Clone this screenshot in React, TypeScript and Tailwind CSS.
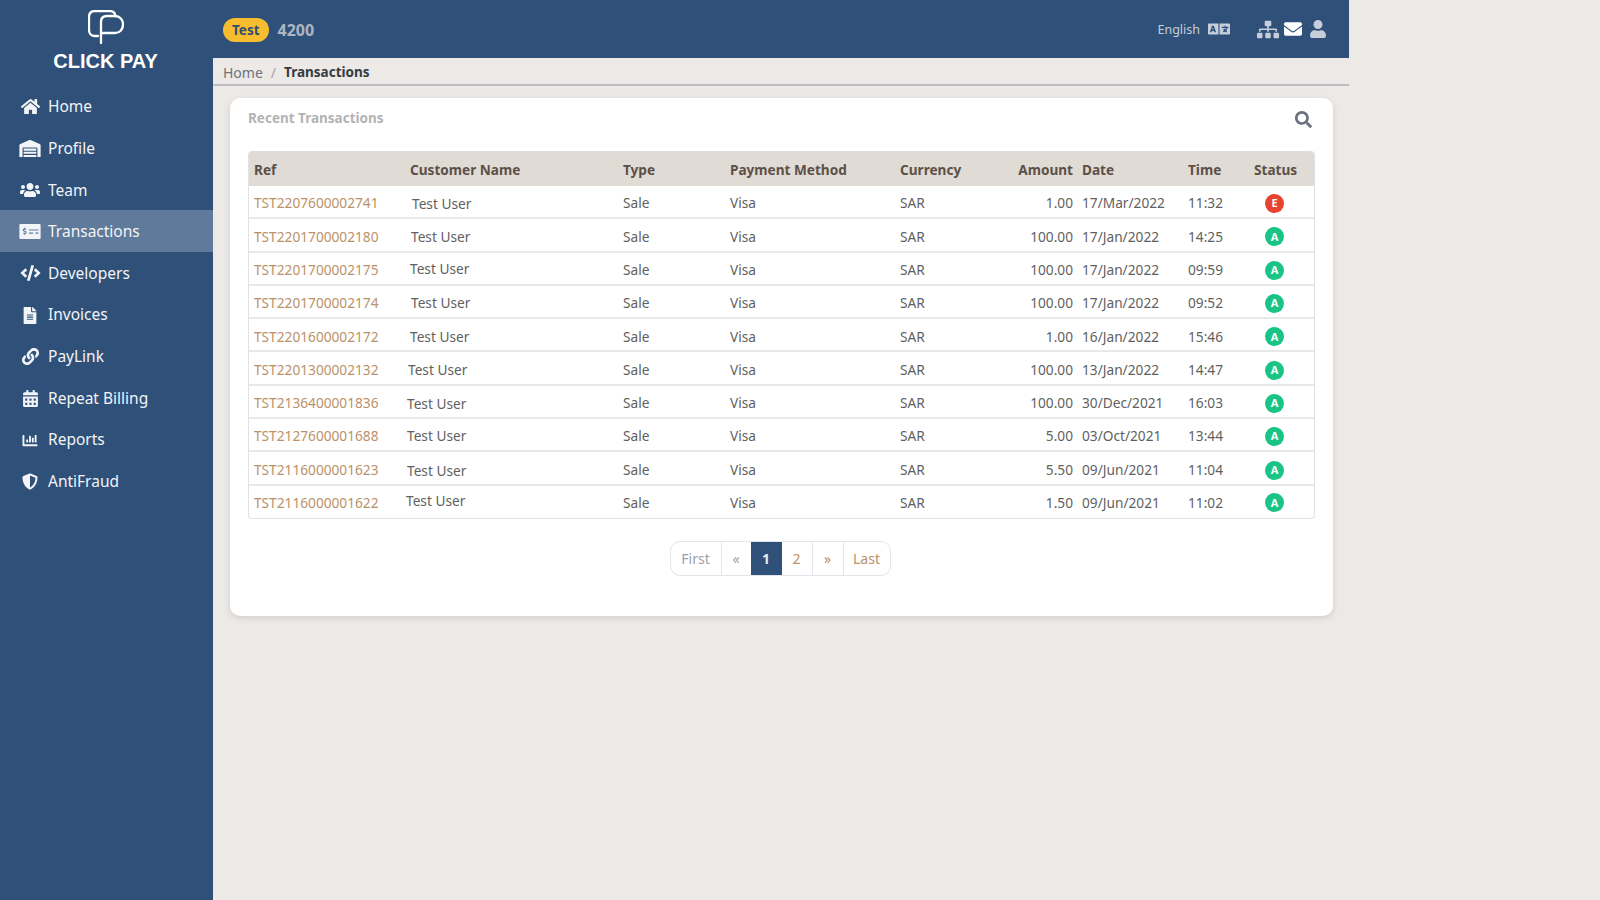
import {
  FaHome,
  FaWarehouse,
  FaUsers,
  FaMoneyCheckAlt,
  FaCode,
  FaFileAlt,
  FaLink,
  FaCalendarAlt,
  FaChartBar,
  FaShieldAlt,
  FaLanguage,
  FaSitemap,
  FaEnvelope,
  FaUser,
  FaSearch,
} from 'react-icons/fa';

const navItems = [
  { label: 'Home', icon: FaHome, size: 'h-[17px] w-[21px]' },
  { label: 'Profile', icon: FaWarehouse, size: 'h-[17px] w-[22px]' },
  { label: 'Team', icon: FaUsers, size: 'h-[16px] w-[22px]' },
  { label: 'Transactions', icon: FaMoneyCheckAlt, size: 'h-[17px] w-[22px]', active: true },
  { label: 'Developers', icon: FaCode, size: 'h-[16px] w-[21px]' },
  { label: 'Invoices', icon: FaFileAlt, size: 'h-[17px] w-[14px]' },
  { label: 'PayLink', icon: FaLink, size: 'h-[17px] w-[17px]' },
  { label: 'Repeat Billing', icon: FaCalendarAlt, size: 'h-[17px] w-[15px]' },
  { label: 'Reports', icon: FaChartBar, size: 'h-[15px] w-[18px]' },
  { label: 'AntiFraud', icon: FaShieldAlt, size: 'h-[17px] w-[16px]' },
];

// the customer cell wobbles a little in the screenshot, hence the per row classes
const rows = [
  { ref: 'TST2207600002741', name: 'ml-[2px] mt-[2px]', amount: '1.00', date: '17/Mar/2022', time: '11:32', status: 'E' },
  { ref: 'TST2201700002180', name: 'ml-[1px]', amount: '100.00', date: '17/Jan/2022', time: '14:25', status: 'A' },
  { ref: 'TST2201700002175', name: 'mb-[2px]', amount: '100.00', date: '17/Jan/2022', time: '09:59', status: 'A' },
  { ref: 'TST2201700002174', name: 'ml-[1px]', amount: '100.00', date: '17/Jan/2022', time: '09:52', status: 'A' },
  { ref: 'TST2201600002172', name: '', amount: '1.00', date: '16/Jan/2022', time: '15:46', status: 'A' },
  { ref: 'TST2201300002132', name: '-ml-[2px]', amount: '100.00', date: '13/Jan/2022', time: '14:47', status: 'A' },
  { ref: 'TST2136400001836', name: '-ml-[3px] mt-[2px]', amount: '100.00', date: '30/Dec/2021', time: '16:03', status: 'A' },
  { ref: 'TST2127600001688', name: '-ml-[3px]', amount: '5.00', date: '03/Oct/2021', time: '13:44', status: 'A' },
  { ref: 'TST2116000001623', name: '-ml-[3px] mt-[2px]', amount: '5.50', date: '09/Jun/2021', time: '11:04', status: 'A' },
  { ref: 'TST2116000001622', name: '-ml-[4px] mb-[3px]', amount: '1.50', date: '09/Jun/2021', time: '11:02', status: 'A' },
];

const cols = 'grid grid-cols-[156px_213px_107px_170px_114px_68px_106px_66px_1fr]';

function Logo() {
  return (
    <svg width="36" height="34" viewBox="0 0 36 34" fill="none" stroke="#fff" strokeWidth="2.3" strokeLinecap="round">
      <path d="M10 26 H7 C3 26 1 23 1 20 V7 C1 3 3 1 7 1 H22 C25 1 27 3 27.5 6" />
      <path d="M13 33 V12 C13 8 15 6 19 6 H27 C32 6 35 10 35 14.5 C35 19 32 23 27 23 H13" />
    </svg>
  );
}

function Sidebar() {
  return (
    <aside className="w-[213px] shrink-0 bg-[#2f5078] text-[#f2f4f7]">
      <div className="flex h-[85px] flex-col items-center pt-[10px] pr-[2px]">
        <Logo />
        <div className="mt-[7px] font-[Liberation_Sans,sans-serif] text-[20px] leading-[20px] font-bold text-white">CLICK PAY</div>
      </div>
      <nav>
        {navItems.map((item) => (
          <div key={item.label} className={`flex h-[41.67px] items-center pt-[2px] ${item.active ? 'bg-[#5f7a9a]' : ''}`}>
            <div className="flex w-[48px] justify-center pl-[12px]">
              <item.icon className={item.size} />
            </div>
            <span className="text-[15.5px]">{item.label}</span>
          </div>
        ))}
      </nav>
    </aside>
  );
}

function Header() {
  return (
    <header className="flex h-[58px] items-center justify-between bg-[#2f5078] pr-[23px] pl-[10px]">
      <div className="mt-[1px] flex items-center gap-[9px]">
        <span className="rounded-full bg-[#f8bd2e] px-[9px] text-[13.5px] leading-[24px] font-bold text-[#2f4f6f]">Test</span>
        <span className="text-[16px] font-bold text-[#aeb6c2]">4200</span>
      </div>
      <div className="flex items-center text-[#c5ced9]">
        <span className="mt-[2px] mr-[8px] text-[12.5px]">English</span>
        <FaLanguage className="mr-[27px] h-[22px] w-[22px]" />
        <FaSitemap className="mr-[5px] h-[21px] w-[22px]" />
        <FaEnvelope className="mr-[8px] h-[20px] w-[18px] text-white" />
        <FaUser className="h-[18px] w-[16px]" />
      </div>
    </header>
  );
}

function StatusBadge({ status }: { status: string }) {
  return (
    <span
      className={`flex h-[19px] w-[19px] items-center justify-center rounded-full text-[11px] font-bold text-white ${
        status === 'E' ? 'bg-[#e8432f]' : 'bg-[#19c485]'
      }`}
    >
      {status}
    </span>
  );
}

function TransactionsTable() {
  return (
    <div className="rounded-[4px] border border-t-0 border-[#e2e2e2]">
      <div className={`${cols} h-[35px] items-center rounded-t-[4px] bg-[#e0dbd4] pt-[3px] pl-[5px] text-[13.6px] font-bold text-[#5c5048]`}>
        <div>Ref</div>
        <div>Customer Name</div>
        <div>Type</div>
        <div>Payment Method</div>
        <div>Currency</div>
        <div className="pr-[9px] text-right">Amount</div>
        <div>Date</div>
        <div>Time</div>
        <div>Status</div>
      </div>
      {rows.map((row, i) => (
        <div
          key={row.ref}
          className={`${cols} items-center pl-[5px] text-[13.7px] text-[#5f5f5f] ${
            i < rows.length - 1 ? 'h-[33.3px] border-b-2 border-[#e8e8e8] pt-[4px]' : 'h-[32.5px] pt-[2px]'
          }`}
        >
          <div className="text-[#bb9169]">{row.ref}</div>
          <div><div className={row.name}>Test User</div></div>
          <div>Sale</div>
          <div>Visa</div>
          <div>SAR</div>
          <div className="pr-[9px] text-right">{row.amount}</div>
          <div>{row.date}</div>
          <div>{row.time}</div>
          <div className="flex justify-center pr-[19px]">
            <StatusBadge status={row.status} />
          </div>
        </div>
      ))}
    </div>
  );
}

function Pagination() {
  const cell = 'flex h-full items-center justify-center border-l border-[#e4e4ec]';
  return (
    <div className="mt-[22px] flex justify-center pr-[3px]">
      <div className="flex h-[35px] overflow-hidden rounded-[10px] border border-[#e4e4ec] text-[14px] text-[#bb9169]">
        <div className="flex h-full w-[50px] items-center justify-center text-[#9a9fae]">First</div>
        <div className={`${cell} w-[30px] text-[#9a9fae]`}>«</div>
        <div className="flex h-full w-[31px] items-center justify-center bg-[#2f5078] font-bold text-[#e4e9ef]">1</div>
        <div className="flex h-full w-[30px] items-center justify-center">2</div>
        <div className={`${cell} w-[31px]`}>»</div>
        <div className={`${cell} w-[47px]`}>Last</div>
      </div>
    </div>
  );
}

export default function App() {
  return (
    <div className="flex h-screen overflow-hidden bg-[#ede9e6] font-[Noto_Sans,sans-serif]">
      <Sidebar />
      <main className="w-[1136px]">
        <Header />
        <div className="flex h-[28px] items-center gap-[8px] border-b-2 border-[#bdbcc2] pt-[3px] pl-[10px] text-[14px]">
          <span className="text-[#6c7280]">Home</span>
          <span className="text-[#a5a5ad]">/</span>
          <span className="text-[13.5px] font-bold text-[#333c42]">Transactions</span>
        </div>
        <section className="mt-[12px] mr-[16px] ml-[17px] h-[518px] rounded-[10px] bg-white px-[18px] pt-[10px] shadow-[0_2px_6px_rgba(0,0,0,0.12)]">
          <div className="flex h-[43px] items-start justify-between">
            <h2 className="text-[13.5px] leading-[20px] font-bold text-[#b3b3b6]">Recent Transactions</h2>
            <FaSearch className="mt-[3px] mr-[3px] h-[17px] w-[17px] text-[#69707f]" />
          </div>
          <TransactionsTable />
          <Pagination />
        </section>
      </main>
    </div>
  );
}
